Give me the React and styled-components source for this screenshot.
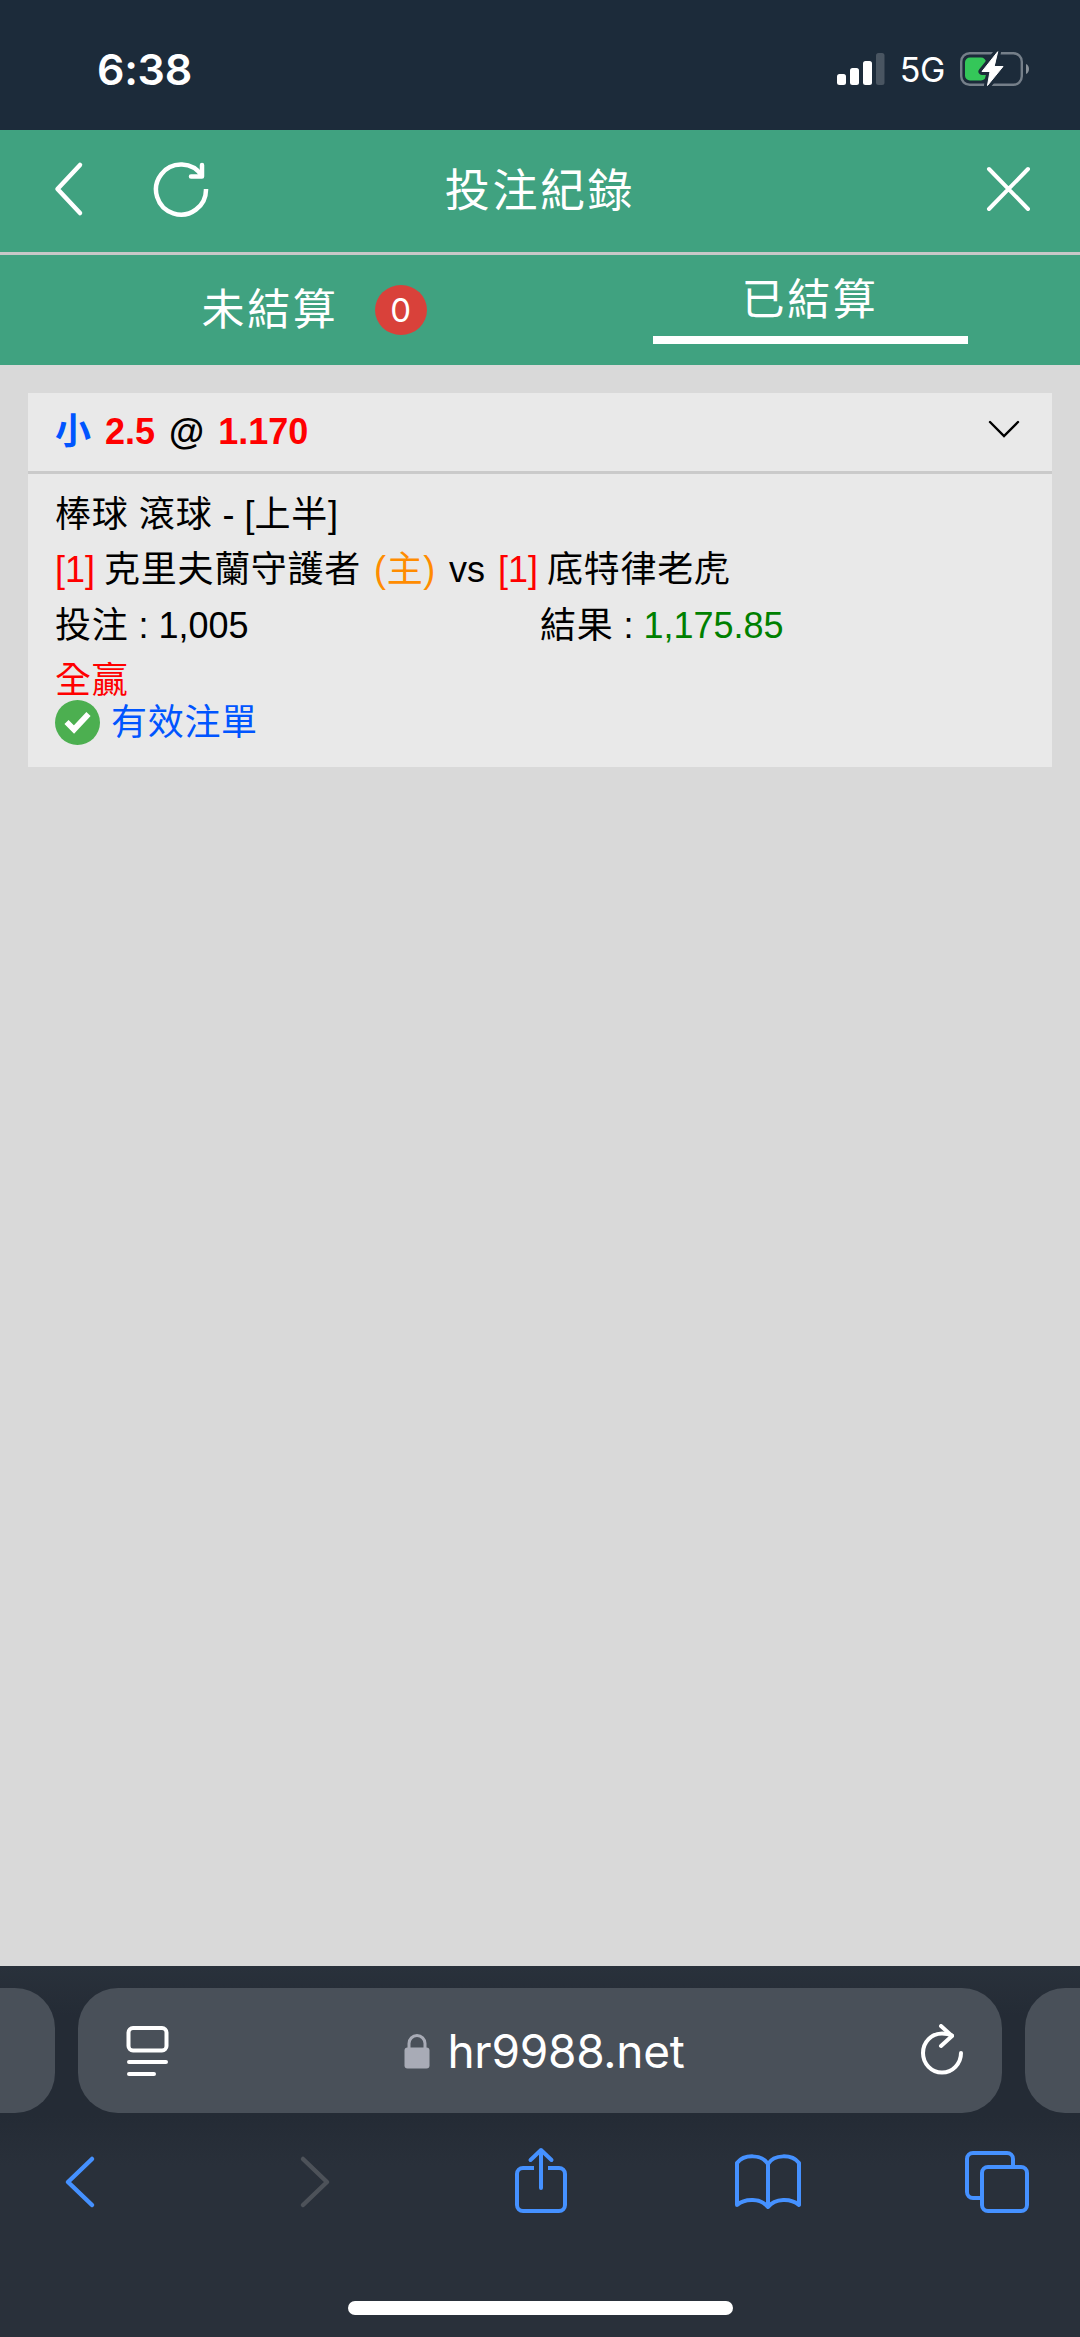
import styled, { createGlobalStyle } from 'styled-components'

const GlobalStyle = createGlobalStyle`
  * {
    box-sizing: border-box;
  }
  body {
    margin: 0;
    background-color: #d9d9d9;
    font-family: 'Liberation Sans', 'Noto Sans CJK TC', sans-serif;
  }
`

const Screen = styled.div`
  display: flex;
  flex-direction: column;
  width: 1080px;
  height: 2337px;
  overflow: hidden;
  background-color: #d9d9d9;
`

const Icon = styled.svg`
  display: block;
  flex: none;
  fill: none;
  stroke: currentColor;
  stroke-linecap: round;
  stroke-linejoin: round;
`

const SolidIcon = styled(Icon)`
  fill: currentColor;
  stroke: none;
`

const StatusBar = styled.div`
  display: flex;
  align-items: center;
  justify-content: space-between;
  height: 130px;
  padding: 8px 50px 0 97px;
  background-color: #1c2b3a;
  color: white;
  font-family: Inter, sans-serif;
`

const Clock = styled.span`
  font-size: 43px;
  font-weight: 600;
  line-height: 52px;
  letter-spacing: -0.3px;
`

const StatusIcons = styled.div`
  display: flex;
  align-items: center;
  gap: 15px;
`

const Network = styled.span`
  padding-top: 2px;
  font-size: 34px;
  font-weight: 400;
  line-height: 40px;
  letter-spacing: -0.4px;
`

const Header = styled.header`
  display: grid;
  grid-template-columns: 270px 1fr 270px;
  align-items: center;
  height: 125px;
  border-bottom: 3px solid #c8c8c8;
  background-color: #40a280;
  color: white;
`

const HeaderSide = styled.div`
  display: flex;
  align-items: center;
  gap: 66px;
  padding: 0 48px 5px 52px;
  justify-content: ${({ $end }) => ($end ? 'flex-end' : 'flex-start')};
`

const Title = styled.h1`
  margin: 0;
  padding-top: 2px;
  font-size: 45px;
  font-weight: 400;
  line-height: 60px;
  letter-spacing: 2.6px;
  text-align: center;
`

const Tabs = styled.nav`
  display: grid;
  grid-template-columns: 1fr 1fr;
  height: 110px;
  background-color: #40a280;
  color: white;
`

const Tab = styled.div`
  display: flex;
  align-items: center;
  justify-content: center;
  gap: 36px;
  padding-left: ${({ $badge }) => ($badge ? '88px' : '0')};
`

const TabLabel = styled.span`
  display: flex;
  justify-content: center;
  font-size: 43px;
  line-height: 55px;
  letter-spacing: 2.7px;
`

const ActiveLabel = styled(TabLabel)`
  width: 315px;
  height: 71px;
  margin-bottom: 4px;
  border-bottom: 8px solid white;
`

const Badge = styled.span`
  display: flex;
  align-items: center;
  justify-content: center;
  width: 52px;
  height: 50px;
  border-radius: 50%;
  background-color: #d9413a;
  font-family: Inter, sans-serif;
  font-size: 33px;
`

const Content = styled.main`
  flex: 1;
  padding: 28px;
`

const Card = styled.section`
  height: 374px;
  background-color: #e9e9e9;
  color: black;
  font-size: 36px;
`

const CardHead = styled.div`
  display: flex;
  align-items: center;
  justify-content: space-between;
  height: 81px;
  padding: 0 31px 0 27px;
  border-bottom: 3px solid #cacaca;

  svg {
    margin-bottom: 7px;
  }
`

const Odds = styled.div`
  font-weight: 700;
  line-height: 56px;
  word-spacing: 4px;
`

const CardBody = styled.div`
  padding: 13px 27px 0;
`

const Line = styled.div`
  display: flex;
  height: 55.4px;
  line-height: 55.4px;
  white-space: pre;
`

const Matchup = styled(Line)`
  gap: 13px;
`

const Team = styled.span`
  display: flex;
  gap: 9px;
`

const Half = styled.div`
  width: 50%;
`

const Text = styled.span`
  color: ${({ $color }) => $color || 'inherit'};
  letter-spacing: ${({ $han }) => ($han ? '0.7px' : '0')};
`

const Valid = styled.div`
  display: flex;
  align-items: center;
  gap: 11px;
  height: 46px;
  margin-top: -9px;
  line-height: 42px;
`

const Browser = styled.footer`
  display: flex;
  flex-direction: column;
  align-items: center;
  height: 371px;
  padding-top: 22px;
  background: linear-gradient(#29313b 0, #242b35 50px, #242b35 150px, #29303a 200px);
`

const AddressRow = styled.div`
  display: flex;
  justify-content: center;
  gap: 23px;
  width: 1080px;
`

const NextPage = styled.div`
  flex: none;
  width: 200px;
  height: 125px;
  border-radius: 40px;
  background-color: #495059;
`

const Address = styled.div`
  display: flex;
  flex: none;
  align-items: center;
  justify-content: space-between;
  width: 924px;
  height: 125px;
  padding: 0 38px 0 47px;
  border-radius: 40px;
  background-color: #495059;
  color: white;
`

const Url = styled.div`
  display: flex;
  align-items: center;
  gap: 17px;
  font-family: Inter, sans-serif;
  font-size: 46px;
  line-height: 56px;
  letter-spacing: -0.25px;
`

const Toolbar = styled.div`
  display: flex;
  align-items: center;
  justify-content: space-between;
  width: 100%;
  height: 80px;
  margin-top: 29px;
  padding: 0 48px 0 45px;
  color: #4591ff;
`

const ToolButton = styled.div`
  display: flex;
  justify-content: center;
  width: 70px;
  color: ${({ $disabled }) => ($disabled ? '#4d5259' : 'inherit')};
`

const HomeIndicator = styled.div`
  width: 385px;
  height: 14px;
  margin-top: 79px;
  border-radius: 7px;
  background-color: white;
`

function Signal() {
  return (
    <SolidIcon width="48" height="32" viewBox="0 0 48 32">
      <rect x="0" y="21" width="9" height="11" rx="2.5" />
      <rect x="13" y="15" width="9" height="17" rx="2.5" />
      <rect x="26" y="8" width="9" height="24" rx="2.5" />
      <rect x="39" y="0" width="8.5" height="32" rx="2.5" opacity="0.2" />
    </SolidIcon>
  )
}

function Battery() {
  const bolt = 'M37.5 2L22 21.500h8L27.500 35.500 43 16.500h-8.500z'
  return (
    <Icon width="70" height="38" viewBox="0 0 70 38">
      <rect x="1.2" y="3.2" width="60.6" height="31.6" rx="8.5" stroke="#757f89" strokeWidth="2.4" />
      <path d="M66 14v10c4-1.500 4-8.500 0-10z" fill="#8a929a" stroke="none" />
      <rect x="5" y="7.500" width="21" height="23" rx="5" fill="#34c759" stroke="none" />
      <path d={bolt} stroke="#1c2b3a" strokeWidth="7" />
      <path d={bolt} fill="white" stroke="white" strokeWidth="1" />
    </Icon>
  )
}

function App() {
  return (
    <>
      <GlobalStyle />
      <Screen>
        <StatusBar>
          <Clock>6:38</Clock>
          <StatusIcons>
            <Signal />
            <Network>5G</Network>
            <Battery />
          </StatusIcons>
        </StatusBar>

        <Header>
          <HeaderSide>
            <Icon width="34" height="56" viewBox="0 0 34 56" strokeWidth="4.5">
              <path d="M28 4L5.500 28 28 52" />
            </Icon>
            <Icon width="60" height="60" viewBox="0 0 60 60" strokeWidth="4.5">
              <path d="M54 30a25 25 0 1 1-4-13" strokeLinecap="butt" />
              <path d="M50 6v11.500H39" />
            </Icon>
          </HeaderSide>
          <Title>投注紀錄</Title>
          <HeaderSide $end>
            <Icon width="48" height="48" viewBox="0 0 48 48" strokeWidth="4">
              <path d="M5 4l39 40M44 4L5 44" />
            </Icon>
          </HeaderSide>
        </Header>

        <Tabs>
          <Tab $badge>
            <TabLabel>未結算</TabLabel>
            <Badge>0</Badge>
          </Tab>
          <Tab>
            <ActiveLabel>已結算</ActiveLabel>
          </Tab>
        </Tabs>

        <Content>
          <Card>
            <CardHead>
              <Odds>
                <Text $color="#0055ff">小</Text> <Text $color="red">2.5</Text> @ <Text $color="red">1.170</Text>
              </Odds>
              <Icon width="34" height="20" viewBox="0 0 34 20" strokeWidth="2.4">
                <path d="M3 3l14 14L31 3" strokeLinejoin="miter" />
              </Icon>
            </CardHead>
            <CardBody>
              <Line>
                <Text $han>棒球 滾球</Text>
                <Text> - [</Text>
                <Text $han>上半</Text>
                <Text>]</Text>
              </Line>
              <Matchup>
                <Team>
                  <Text $color="red">[1]</Text>
                  <Text $han>克里夫蘭守護者</Text>
                </Team>
                <Text $han $color="#ff8c00">(主)</Text>
                <Text>vs</Text>
                <Team>
                  <Text $color="red">[1]</Text>
                  <Text $han>底特律老虎</Text>
                </Team>
              </Matchup>
              <Line>
                <Half>
                  <Text $han>投注</Text> : 1,005
                </Half>
                <Half>
                  <Text $han>結果</Text> : <Text $color="green">1,175.85</Text>
                </Half>
              </Line>
              <Line>
                <Text $han $color="red">全贏</Text>
              </Line>
              <Valid>
                <Icon width="45" height="45" viewBox="0 0 45 45">
                  <circle cx="22.500" cy="22.500" r="22.500" fill="#4caf50" stroke="none" />
                  <path
                    d="M11.500 22l7.500 7.500L33.500 14"
                    stroke="white"
                    strokeWidth="5.8"
                    strokeLinecap="butt"
                    strokeLinejoin="miter"
                  />
                </Icon>
                <Text $han $color="#0055ff">有效注單</Text>
              </Valid>
            </CardBody>
          </Card>
        </Content>

        <Browser>
          <AddressRow>
            <NextPage />
            <Address>
              <Icon width="44" height="54" viewBox="0 0 44 54" strokeWidth="4">
                <rect x="3.500" y="4" width="38" height="22.500" rx="4.500" />
                <path d="M4 38h37M4 50h25" />
              </Icon>
              <Url>
                <Icon width="26" height="36" viewBox="0 0 26 36">
                  <path d="M5 18V10.500a8 8 0 0 1 16 0V18" stroke="#a8abb6" strokeWidth="3" />
                  <rect x="0.500" y="14.500" width="25" height="21" rx="3" fill="#a8abb6" stroke="none" />
                </Icon>
                hr9988.net
              </Url>
              <Icon width="44" height="54" viewBox="0 0 44 54" strokeWidth="4">
                <path d="M41 29a19 19.500 0 1 1-19-19.500c4 0 7 .5 10 2" />
                <path d="M21 2l11 10-11 10" />
              </Icon>
            </Address>
            <NextPage />
          </AddressRow>
          <Toolbar>
            <ToolButton>
              <Icon width="34" height="54" viewBox="0 0 34 54" strokeWidth="4.500">
                <path d="M29 4L5 27l24 23" />
              </Icon>
            </ToolButton>
            <ToolButton $disabled>
              <Icon width="46" height="54" viewBox="-12 0 46 54" strokeWidth="4.500">
                <path d="M5 4l24 23L5 50" />
              </Icon>
            </ToolButton>
            <ToolButton>
              <Icon width="58" height="70" viewBox="-4 0 58 70" strokeWidth="4">
                <path d="M20 21H9a6 6 0 0 0-6 6v31a6 6 0 0 0 6 6h36a6 6 0 0 0 6-6V27a6 6 0 0 0-6-6H34" strokeLinecap="butt" />
                <path d="M27 41V3M16.500 13L27 3l10.500 10" />
              </Icon>
            </ToolButton>
            <ToolButton>
              <Icon width="70" height="60" viewBox="0 0 70 60" strokeWidth="4">
                <path d="M35 55V12C29 2 11 2 4 11v42C12 46 28 46 35 55c7-9 23-9 31-2V11C59 2 41 2 35 12" />
              </Icon>
            </ToolButton>
            <ToolButton>
              <Icon width="66" height="66" viewBox="0 0 66 66" strokeWidth="4">
                <path d="M17 49H9a6 6 0 0 1-6-6V10a6 6 0 0 1 6-6h34a6 6 0 0 1 6 6v7" />
                <rect x="18" y="18" width="45" height="44" rx="6" />
              </Icon>
            </ToolButton>
          </Toolbar>
          <HomeIndicator />
        </Browser>
      </Screen>
    </>
  )
}

export default App
